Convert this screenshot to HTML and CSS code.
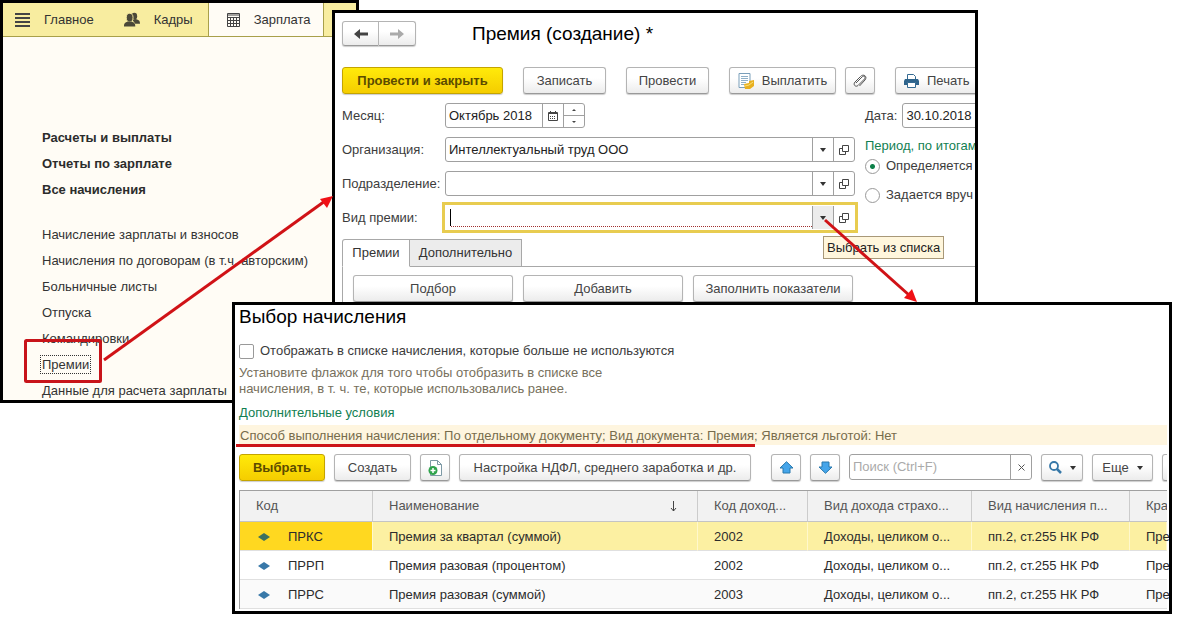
FILE: index.html
```
<!DOCTYPE html>
<html lang="ru">
<head>
<meta charset="utf-8">
<title>Премия (создание)</title>
<link rel="stylesheet" href="styles.css">
</head>
<body>
<svg class="defs" width="0" height="0" aria-hidden="true">
  <symbol id="open" viewBox="0 0 12 12"><path d="M4.500 1.500h6v6h-6zM4.500 4.500h-3v6h6v-3" fill="none" stroke="#444"/></symbol>
  <symbol id="caret" viewBox="0 0 6 4"><path d="M0 0h6L3 4z" fill="#333"/></symbol>
  <symbol id="item" viewBox="0 0 12 8"><path d="M0 4L6 0l6 4-6 4z"/></symbol>
  <symbol id="arrow" viewBox="0 0 15 13"><path d="M7.500 .7L14 7h-3v5H4V7H1z" fill="#45a5ea" stroke="#2878ad"/></symbol>
</svg>
<main class="stage">
  <section class="window menu-window">
    <nav class="sections">
      <a class="section" href="#main"><svg width="15" height="14" viewBox="0 0 15 14"><path d="M0 1h15M0 5h15M0 9h15M0 13h15" stroke="#444" stroke-width="2"/></svg>Главное</a>
      <a class="section" href="#staff"><svg width="16" height="16" viewBox="0 0 17 16" fill="#4b4838"><ellipse cx="11" cy="4" rx="3" ry="3.700"/><path d="M9 8l3-1c3 1 5 1 5 5h-5z"/><ellipse cx="6" cy="5.500" rx="3.600" ry="4.600" stroke="#f8eda0"/><path d="M0 15c0-4 1-4 4-5.500h4c3 1.500 4 1.500 4 5.500z"/></svg>Кадры</a>
      <a class="section active" href="#salary"><svg width="13" height="14" viewBox="0 0 13 14"><path d="M.5.500h12v13H.5zM.5 4.500h12M.5 7.500h12M.5 10.500h12M3.500 4v9M6.500 4v9M9.500 4v9M1 2h11" fill="none" stroke="#444"/></svg>Зарплата</a>
    </nav>
    <div class="links">
      <a class="strong" href="#pay">Расчеты и выплаты</a>
      <a class="strong" href="#reports">Отчеты по зарплате</a>
      <a class="strong" href="#all">Все начисления</a>
    </div>
    <div class="links">
      <a href="#l1">Начисление зарплаты и взносов</a>
      <a href="#l2">Начисления по договорам (в т.ч. авторским)</a>
      <a href="#l3">Больничные листы</a>
      <a href="#l4">Отпуска</a>
      <a href="#l5">Командировки</a>
      <a href="#l6"><span class="focused">Премии</span></a>
      <a class="last" href="#l7">Данные для расчета зарплаты</a>
    </div>
  </section>

  <section class="window bonus-window">
    <header class="bonus-head">
      <div class="history">
        <button class="btn" aria-label="Назад"><svg width="14" height="10" viewBox="0 0 14 10"><path d="M0 5l6-5v3.500h8v3H6V10z" fill="#444"/></svg></button>
        <button class="btn" aria-label="Вперед"><svg width="14" height="10" viewBox="0 0 14 10"><path d="M14 5L8 0v3.500H0v3h8V10z" fill="#aaa"/></svg></button>
      </div>
      <h1>Премия (создание) *</h1>
    </header>
    <div class="toolbar">
      <button class="btn primary w-xl">Провести и закрыть</button>
      <button class="btn w-md">Записать</button>
      <button class="btn w-md">Провести</button>
      <div class="pair">
        <button class="btn w-lg"><svg width="16" height="16" viewBox="0 0 16 16"><path d="M1 .5h11v14H1z" fill="#fff" stroke="#7a9fba"/><path d="M3 3.500h7M3 5.500h7M3 7.500h7M3 9.500h5M3 11.500h3" stroke="#8fb0c8"/><path d="M6 11l5-1V8l5-1v6l-4 3H7z" fill="#e8b020"/><path d="M7 13l4-1 4-3" fill="none" stroke="#fbe27a"/></svg>Выплатить</button>
        <button class="btn icon" aria-label="Файлы"><svg width="14" height="14" viewBox="0 0 14 14"><path d="M3 9l6-6c2-2 4 0 2.500 2L5 11.500C3 13.500-.5 11 2 8l5.500-5.500C10-.5 15 2 12 6l-5.500 6" fill="none" stroke="#555"/></svg></button>
      </div>
      <button class="btn w-lg print"><svg width="15" height="14" viewBox="0 0 15 14"><path d="M3.500 5V.5h6l2 2V5" fill="#fff" stroke="#346a92"/><path d="M1 5h13l1 2v4H0V7z" fill="#2f648c"/><path d="M3.500 8.500h8v5h-8z" fill="#fff" stroke="#346a92"/></svg>Печать</button>
    </div>
    <div class="form">
      <div class="fields">
        <label for="month">Месяц:</label>
        <div class="field month"><input id="month" value="Октябрь 2018"><button class="cell" aria-label="Календарь"><svg width="10" height="10" viewBox="0 0 10 10"><path d="M.5 1.500h9v8h-9z" fill="none" stroke="#444"/><path d="M0 2.500h10M2.500 0v2M7.500 0v2" stroke="#444"/><path d="M2 5.500h6M2 7.500h6" stroke="#444" stroke-dasharray="1 1"/></svg></button><span class="spin"><button aria-label="Больше"><svg width="4" height="2"><path d="M0 2h4L2 0z" fill="#444"/></svg></button><button aria-label="Меньше"><svg width="4" height="2"><path d="M0 0h4L2 2z" fill="#444"/></svg></button></span></div>
        <label for="org">Организация:</label>
        <div class="field"><input id="org" value="Интеллектуальный труд ООО"><button class="cell" aria-label="Список"><svg width="6" height="4"><use href="#caret"/></svg></button><button class="cell" aria-label="Открыть"><svg width="12" height="12"><use href="#open"/></svg></button></div>
        <label for="dep">Подразделение:</label>
        <div class="field"><input id="dep"><button class="cell" aria-label="Список"><svg width="6" height="4"><use href="#caret"/></svg></button><button class="cell" aria-label="Открыть"><svg width="12" height="12"><use href="#open"/></svg></button></div>
        <label for="kind">Вид премии:</label>
        <div class="field current"><span class="caret-line"></span><input id="kind" class="required"><button class="cell pressed" aria-label="Выбрать из списка"><svg width="6" height="4"><use href="#caret"/></svg></button><button class="cell" aria-label="Открыть"><svg width="12" height="12"><use href="#open"/></svg></button></div>
      </div>
      <div class="side">
        <div class="date"><label for="date">Дата:</label><div class="field"><input id="date" value="30.10.2018"></div></div>
        <span class="green">Период, по итогам</span>
        <label class="radio"><input type="radio" name="period" checked>Определяется</label>
        <label class="radio"><input type="radio" name="period">Задается вруч</label>
      </div>
    </div>
    <div class="tabs"><button class="tab on">Премии</button><button class="tab">Дополнительно</button></div>
    <div class="panel">
      <button class="btn">Подбор</button>
      <button class="btn">Добавить</button>
      <button class="btn">Заполнить показатели</button>
    </div>
    <div class="tooltip">Выбрать из списка</div>
  </section>

  <section class="window choice-window">
    <h1>Выбор начисления</h1>
    <label class="check"><input type="checkbox">Отображать в списке начисления, которые больше не используются</label>
    <p class="hint">Установите флажок для того чтобы отобразить в списке все<br>начисления, в т. ч. те, которые использовались ранее.</p>
    <p class="green">Дополнительные условия</p>
    <p class="conditions">Способ выполнения начисления: По отдельному документу; Вид документа: Премия; Является льготой: Нет</p>
    <div class="toolbar choice-bar">
      <button class="btn primary w-choose">Выбрать</button>
      <button class="btn w-sm">Создать</button>
      <button class="btn icon" aria-label="Создать копированием"><svg width="14" height="16" viewBox="0 0 14 16"><path d="M2.500.5h7l4 4v11h-11z" fill="#fff" stroke="#7d99a5"/><path d="M9.500.5v4h4" fill="none" stroke="#7d99a5"/><circle cx="5" cy="10.500" r="4.500" fill="#2fa34c"/><path d="M5 8v5M2.500 10.500h5" stroke="#fff" stroke-width="1.500"/></svg></button>
      <button class="btn w-setup">Настройка НДФЛ, среднего заработка и др.</button>
      <button class="btn icon move" aria-label="Вверх"><svg width="15" height="13"><use href="#arrow"/></svg></button>
      <button class="btn icon" aria-label="Вниз"><svg class="flip" width="15" height="13"><use href="#arrow"/></svg></button>
      <div class="field search"><input type="text" placeholder="Поиск (Ctrl+F)" aria-label="Поиск"><button class="cell" aria-label="Очистить"><svg width="7" height="7"><path d="M.5.500l6 6M6.500.5l-6 6" stroke="#555"/></svg></button></div>
      <button class="btn w-find" aria-label="Найти"><svg width="13" height="13" viewBox="0 0 13 13"><circle cx="5" cy="5" r="4" fill="none" stroke="#3778a8" stroke-width="1.800"/><path d="M8 8l4 4" stroke="#3778a8" stroke-width="2.500"/></svg><svg width="6" height="4"><use href="#caret"/></svg></button>
      <button class="btn w-more">Еще<svg width="6" height="4"><use href="#caret"/></svg></button>
      <button class="btn icon" aria-label="Справка"></button>
    </div>
    <table>
      <colgroup><col class="c-code"><col class="c-name"><col class="c-income"><col class="c-ins"><col class="c-kind"><col class="c-short"></colgroup>
      <thead><tr><th>Код</th><th><span class="sorted">Наименование<svg width="7" height="11" viewBox="0 0 7 11"><path d="M3.500 0v10M1 7l2.500 3L6 7" fill="none" stroke="#444"/></svg></span></th><th>Код доход...</th><th>Вид дохода страхо...</th><th>Вид начисления п...</th><th>Кра</th></tr></thead>
      <tbody>
        <tr class="selected"><td><span class="code"><svg width="12" height="8"><use href="#item"/></svg>ПРКС</span></td><td>Премия за квартал (суммой)</td><td>2002</td><td>Доходы, целиком о...</td><td>пп.2, ст.255 НК РФ</td><td>Пре</td></tr>
        <tr><td><span class="code"><svg width="12" height="8"><use href="#item"/></svg>ПРРП</span></td><td>Премия разовая (процентом)</td><td>2002</td><td>Доходы, целиком о...</td><td>пп.2, ст.255 НК РФ</td><td>Пре</td></tr>
        <tr><td><span class="code"><svg width="12" height="8"><use href="#item"/></svg>ПРРС</span></td><td>Премия разовая (суммой)</td><td>2003</td><td>Доходы, целиком о...</td><td>пп.2, ст.255 НК РФ</td><td>Пре</td></tr>
      </tbody>
    </table>
  </section>

  <svg class="marks" width="1178" height="623" viewBox="0 0 1178 623" aria-hidden="true">
    <rect x="25.500" y="340.500" width="75" height="41" rx="1" fill="none" stroke="#c8141a" stroke-width="3"/>
    <path d="M104 360L325 201" stroke="#d01216" stroke-width="3"/>
    <path d="M333 196l-6 12-7-9z" fill="#f01015"/>
    <path d="M825 220L909 295" stroke="#d01216" stroke-width="3"/>
    <path d="M917 302l-13-4 8-9z" fill="#f01015"/>
    <path d="M236 445.500H755" stroke="#cc1519" stroke-width="3"/>
  </svg>
</main>
</body>
</html>
```
FILE: styles.css
```
* { box-sizing: border-box; }
body { margin: 0; background: #fff; color: #3c3c3c; font: 13px/16px "Liberation Sans", Arial, sans-serif; }
button, input { font: inherit; color: inherit; margin: 0; }
a { color: inherit; text-decoration: none; }
h1, p { margin: 0; }
h1 { font-size: 19px; font-weight: 400; line-height: 24px; color: #000; }
svg { flex: none; }
.defs { position: absolute; }
.stage { position: relative; min-height: 100vh; overflow: hidden; }
.window { position: absolute; border: 3px solid #000; background: #fff; overflow: hidden; }
.marks { position: absolute; left: 0; top: 0; pointer-events: none; }

.menu-window { left: 0; top: 0; width: 359px; background: #fffcf5; }
.sections { display: flex; background: #f8eda0; border-bottom: 1px solid #a8a04a; }
.section { display: flex; align-items: center; gap: 14px; height: 33px; padding: 0 12px; color: #333; }
.section + .section { padding-left: 18px; padding-right: 15px; }
.section.active { background: #fffcf5; border: 1px solid #a8a04a; border-width: 0 1px; padding-right: 12px; }
.links { display: flex; flex-direction: column; padding-left: 39px; line-height: 26px; color: #333; white-space: nowrap; }
.sections + .links { padding-top: 88px; padding-bottom: 19px; }
.strong { font-weight: 700; color: #2c2c2c; }
.focused { outline: 1px dotted #333; outline-offset: 1px; line-height: 16px; }
.last { height: 22px; }

.btn { display: inline-flex; align-items: center; justify-content: center; flex: none; gap: 8px; height: 27px; padding: 0 8px; border: 1px solid #b4b4b4; border-bottom-color: #999; border-radius: 3px; background: linear-gradient(#fff 40%, #ececec); box-shadow: 0 1px 1px #ccc; color: #444; white-space: nowrap; }
.btn.primary { font-weight: 700; color: #5c4b00; border-color: #c4a400; background: linear-gradient(#ffea0a, #f5cd00); }
.btn.icon { width: 30px; padding: 0; }
.toolbar { display: flex; gap: 20px; }
.pair { display: flex; gap: 9px; }
.w-xl { width: 161px; }
.w-lg { width: 107px; }
.w-md { width: 83px; }
.w-sm { width: 77px; }
.w-choose { width: 86px; }
.w-setup { width: 292px; }
.w-find { width: 42px; }
.w-more { width: 61px; }
.btn.print { justify-content: flex-start; }

.field { display: flex; height: 25px; border: 1px solid #a0a0a0; border-radius: 3px; background: #fff; }
.field input { flex: 1; min-width: 0; border: 0; outline: 0; background: none; padding: 0 3px; color: #222; }
.cell { display: flex; align-items: center; justify-content: center; flex: none; width: 21px; padding: 0; border: 0; border-left: 1px solid #a0a0a0; background: none; }

.bonus-window { left: 332px; top: 10px; width: 646px; padding: 8px 0 0 7px; }
.bonus-head { display: flex; align-items: center; gap: 56px; }
.history { display: flex; }
.history .btn { width: 37px; height: 25px; }
.history .btn:first-child { border-radius: 3px 0 0 3px; }
.history .btn:last-child { border-radius: 0 3px 3px 0; border-left: 0; }
.bonus-window .toolbar { margin-top: 21px; }
.form { display: flex; gap: 10px; margin-top: 9px; }
.fields { display: grid; grid-template-columns: 103px 410px; row-gap: 9px; align-items: center; }
.month { width: 140px; }
.spin { display: flex; flex-direction: column; width: 21px; border-left: 1px solid #a0a0a0; }
.spin button { flex: 1; display: flex; align-items: center; justify-content: center; padding: 0; border: 0; background: none; }
.spin button + button { border-top: 1px solid #a0a0a0; }
.current { border-color: transparent; outline: 3px solid #e8cc50; border-radius: 0; align-items: stretch; }
.caret-line { width: 1px; margin: 3px 0 3px 4px; background: #000; }
.field .required { margin-bottom: 2px; border-bottom: 1px dotted #a03030; }
.pressed { background: #ececec; }
.side { flex: none; display: flex; flex-direction: column; white-space: nowrap; }
.date { display: flex; align-items: center; gap: 5px; }
.date .field { width: 120px; }
.green { color: #128052; }
.side .green { margin-top: 10px; }
.radio { display: flex; align-items: center; gap: 6px; height: 30px; }
.side .green + .radio { height: 24px; }
.side .radio + .radio { margin-top: 2px; }
.radio input { appearance: none; width: 15px; height: 15px; margin: 0; border: 1px solid #999; border-radius: 50%; }
.radio input:checked { background: radial-gradient(circle, #0c8048 2px, #fff 3px); }
.tabs { display: flex; margin-top: 9px; height: 28px; border-bottom: 1px solid #a8a8a8; }
.tab { height: 28px; width: 68px; padding: 0; border: 1px solid #a8a8a8; background: #fff; color: #333; }
.tab.on { border-bottom-color: #fff; border-radius: 3px 0 0 0; }
.tab + .tab { width: 112px; border-left: 0; background: #ececec; }
.panel { display: flex; gap: 10px; padding: 8px 10px 0; border-left: 1px solid #a8a8a8; }
.panel .btn { width: 160px; }
.tooltip { position: absolute; left: 488px; top: 223px; padding: 3px 3px 2px; border: 1px solid #a89878; background: #fff6dc; color: #222; white-space: nowrap; }

.choice-window { left: 232px; top: 302px; width: 940px; padding: 0 2px 2px 4px; }
.check { display: flex; align-items: center; gap: 6px; margin-top: 14px; }
.check input { appearance: none; width: 15px; height: 15px; margin: 0; border: 1px solid #999; border-radius: 2px; background: #fff; }
.hint { margin-top: 6px; color: #77705c; }
.choice-window > .green { margin-top: 8px; }
.conditions { margin-top: 4px; padding: 3px 1px 1px; background: #fef5df; color: #776c4c; white-space: nowrap; }
.choice-bar { gap: 9px; margin-top: 9px; overflow: hidden; padding-bottom: 2px; }
.move { margin-left: 11px; }
.flip { transform: rotate(180deg); }
.search { flex: none; width: 183px; height: 26px; }
.search input::placeholder { color: #aaa; opacity: 1; }
table { width: 100%; margin-top: 7px; border-collapse: separate; border-spacing: 0; table-layout: fixed; border-top: 1px solid #a0a0a0; border-left: 1px solid #a0a0a0; color: #2c2c2c; }
th, td { padding: 0 0 0 16px; text-align: left; font-weight: 400; white-space: nowrap; overflow: hidden; }
th { height: 31px; border-right: 1px solid #ccc; border-bottom: 1px solid #c4c4c4; background: #f2f2f2; color: #555; }
th:last-child { border-right: 0; }
td { height: 29px; padding-top: 2px; border-bottom: 1px solid #e0e0e0; }
td:last-child { overflow: visible; }
tbody tr:last-child td { background: #fafafa; }
tbody .selected td { background: #fcf0a2; border-right: 1px solid #fff8cc; }
tbody .selected td:first-child { background: #ffd820; }
.c-code { width: 133px; }
.c-name { width: 325px; }
.c-income { width: 110px; }
.c-ins { width: 164px; }
.c-kind { width: 158px; }
.sorted { display: flex; justify-content: space-between; align-items: center; padding-right: 20px; }
.code { display: flex; align-items: center; gap: 18px; padding-left: 2px; fill: #3878a8; }
.selected .code { fill: #3c7060; }
```
